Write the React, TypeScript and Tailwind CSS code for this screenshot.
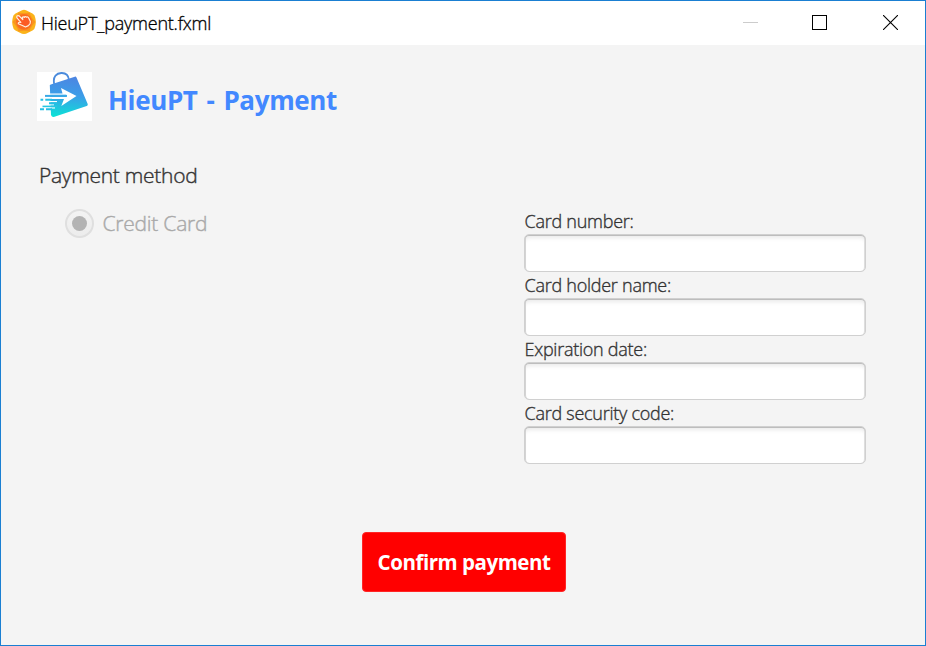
import React from "react";

const fields = ["Card number:", "Card holder name:", "Expiration date:", "Card security code:"];

function AppIcon() {
  return (
    <svg width="24" height="26" viewBox="0 0 24 26" className="-mt-0.5 shrink-0">
      <path d="M12 0.8 Q14 0.8 16 2.3 L20.5 4.6 Q23 6 23.3 9 Q24.3 13 23.3 17 Q23 20 20.5 21.4 L16 23.7 Q12 26.3 8 23.7 L3.5 21.4 Q1 20 .7 17 Q-.3 13 .7 9 Q1 6 3.5 4.6 L8 2.3 Q10 .8 12 .8Z" fill="#fbb31a" />
      <path d="M6.5 3.5 Q12 5 17.5 3.5 Q19 9 23.5 13 Q19 17 17.5 22.5 Q12 21 6.5 22.5 Q5 17 .5 13 Q5 9 6.5 3.5Z" fill="#f9941e" />
      <circle cx="12" cy="12.8" r="7.9" fill="#fb6d20" />
      <path d="M5 7 Q6.2 6 7.6 7.3 L10.8 10.6 L10.4 8.6 Q11 7.2 12.3 8.4 Q13 6.8 14.4 8.2 Q15.8 7.2 16.8 9.2 L18.4 12.6 Q18.6 15.2 16.4 16.6 L13.5 18 L9.8 16.3 L6.3 14.8 Q6 12.9 8.8 13.3 L5.2 9.2 Q4.3 8 5 7Z" fill="#fc5b24" stroke="#fff1e0" strokeWidth="1.2" strokeLinejoin="round" />
    </svg>
  );
}

function BagLogo() {
  return (
    <svg width="55" height="49" viewBox="0 0 55 49" className="shrink-0 bg-white">
      <defs>
        <linearGradient id="bag" gradientUnits="userSpaceOnUse" x1="28" y1="5" x2="24" y2="45">
          <stop offset="0" stopColor="#4c86e2" />
          <stop offset="0.45" stopColor="#3b9ee8" />
          <stop offset="1" stopColor="#0be2d6" />
        </linearGradient>
      </defs>
      <path d="M17.2 12 C15.5 4 20 1.2 24.3 1 C28.5 .8 31.5 3.5 32 8" fill="none" stroke="#4b8bdc" strokeWidth="1.8" />
      <path d="M14.5 12.2 L37.8 4.7 Q39 4.3 39.6 5.8 L50.7 32 Q51.2 33.5 49.7 34 L17.5 44.8 Q14.8 45.5 14 43 L12.8 13Z" fill="url(#bag)" />
      <path d="M24 16 L39.5 24 L24.3 34 L27 26.9 L8 26.9 L8 25 L29 25 L29 22.8 L8 22.8 L8 21.6 L25.5 21.6Z" fill="white" />
      <path d="M8 23.9 H30" stroke="#3aa9e7" strokeWidth="2" />
      <path d="M12 29.7 H20 M11 32.9 H17 M11 35.8 H18" stroke="white" strokeWidth="1.3" />
      <path d="M3.5 27.8 H6.2 M8.3 27.8 H15 M12 31.3 H20 M3 37.2 H7 M9 37.2 H15" stroke="#26bfe4" strokeWidth="2" />
      <path d="M5.5 34.4 H20" stroke="#25c7e3" strokeWidth="1.6" />
    </svg>
  );
}

function WindowControls() {
  return (
    <div className="-mt-0.5 ml-auto mr-[27px] flex h-[15px] items-center gap-[54px]">
      <svg width="15" height="15"><path d="M0 7.5H15" stroke="#ccc" /></svg>
      <svg width="15" height="15"><rect x=".5" y=".5" width="14" height="14" fill="none" stroke="#000" /></svg>
      <svg width="15" height="15" className="ml-0.5"><path d="M0 0L15 15M15 0L0 15" stroke="#000" strokeWidth="1.1" /></svg>
    </div>
  );
}

export default function App() {
  return (
    <div className="flex h-[646px] w-[926px] flex-col border border-[#1a7fd2] bg-[#f4f4f4] font-['Open_Sans',sans-serif] text-[#333]">
      <header className="flex h-11 shrink-0 items-center bg-white pl-[11px]">
        <AppIcon />
        <span className="-mt-px ml-[5px] whitespace-nowrap text-[18px] font-light leading-6 tracking-[-0.23px] text-black [-webkit-text-stroke:0.3px]">HieuPT_payment.fxml</span>
        <WindowControls />
      </header>
      <main className="flex flex-1 flex-col pl-9 pt-[27px]">
        <div className="flex h-[49px] items-center">
          <BagLogo />
          <h1 className="ml-4 mt-1.5 whitespace-nowrap text-[26px] font-bold leading-9 tracking-[-0.35px] text-[#4288ff] [word-spacing:2.5px]">HieuPT - Payment</h1>
        </div>
        <div className="mt-[39px] flex h-[304px]">
          <section className="w-[487px] pl-0.5 font-light [-webkit-text-stroke:0.4px]">
            <h2 className="whitespace-nowrap text-[21px] leading-[30px] tracking-[-0.28px]">Payment method</h2>
            <label className="ml-[26px] mt-[18px] flex items-center text-[21px] leading-[30px] text-[#a9a9a9]">
              <span className="mt-px flex size-[29px] items-center justify-center rounded-full border-2 border-[#dfdfdf] bg-gradient-to-b from-[#f3f3f3] to-[#ececec]">
                <span className="size-[15px] rounded-full bg-[#b3b3b3]" />
              </span>
              <span className="ml-[8.5px] whitespace-nowrap tracking-[-0.23px]">Credit Card</span>
            </label>
          </section>
          <form className="mt-12 w-[342px]">
            {fields.map((label) => (
              <label key={label} className="block h-16">
                <span className="block h-[26px] whitespace-nowrap pl-[0.5px] text-[18px] font-light leading-[27px] tracking-[-0.26px] [-webkit-text-stroke:0.35px]">{label}</span>
                <input className="block h-[38px] w-[342px] rounded-[5px] border border-[#d0d0d0] bg-white px-3 text-lg shadow-[inset_0_1px_0_#bdbdbd,inset_1px_0_0_#d4d4d4,inset_-1px_0_0_#dedede,inset_0_5px_4px_-2px_#eaeaea] outline-none" />
              </label>
            ))}
          </form>
        </div>
        <button className="ml-[325px] mt-[68px] h-[60px] w-[204px] whitespace-nowrap rounded-[4px] border border-[#ff2626] bg-[#ff0000] text-[20.5px] font-bold leading-[30px] tracking-[-0.47px] text-white">Confirm payment</button>
      </main>
    </div>
  );
}
